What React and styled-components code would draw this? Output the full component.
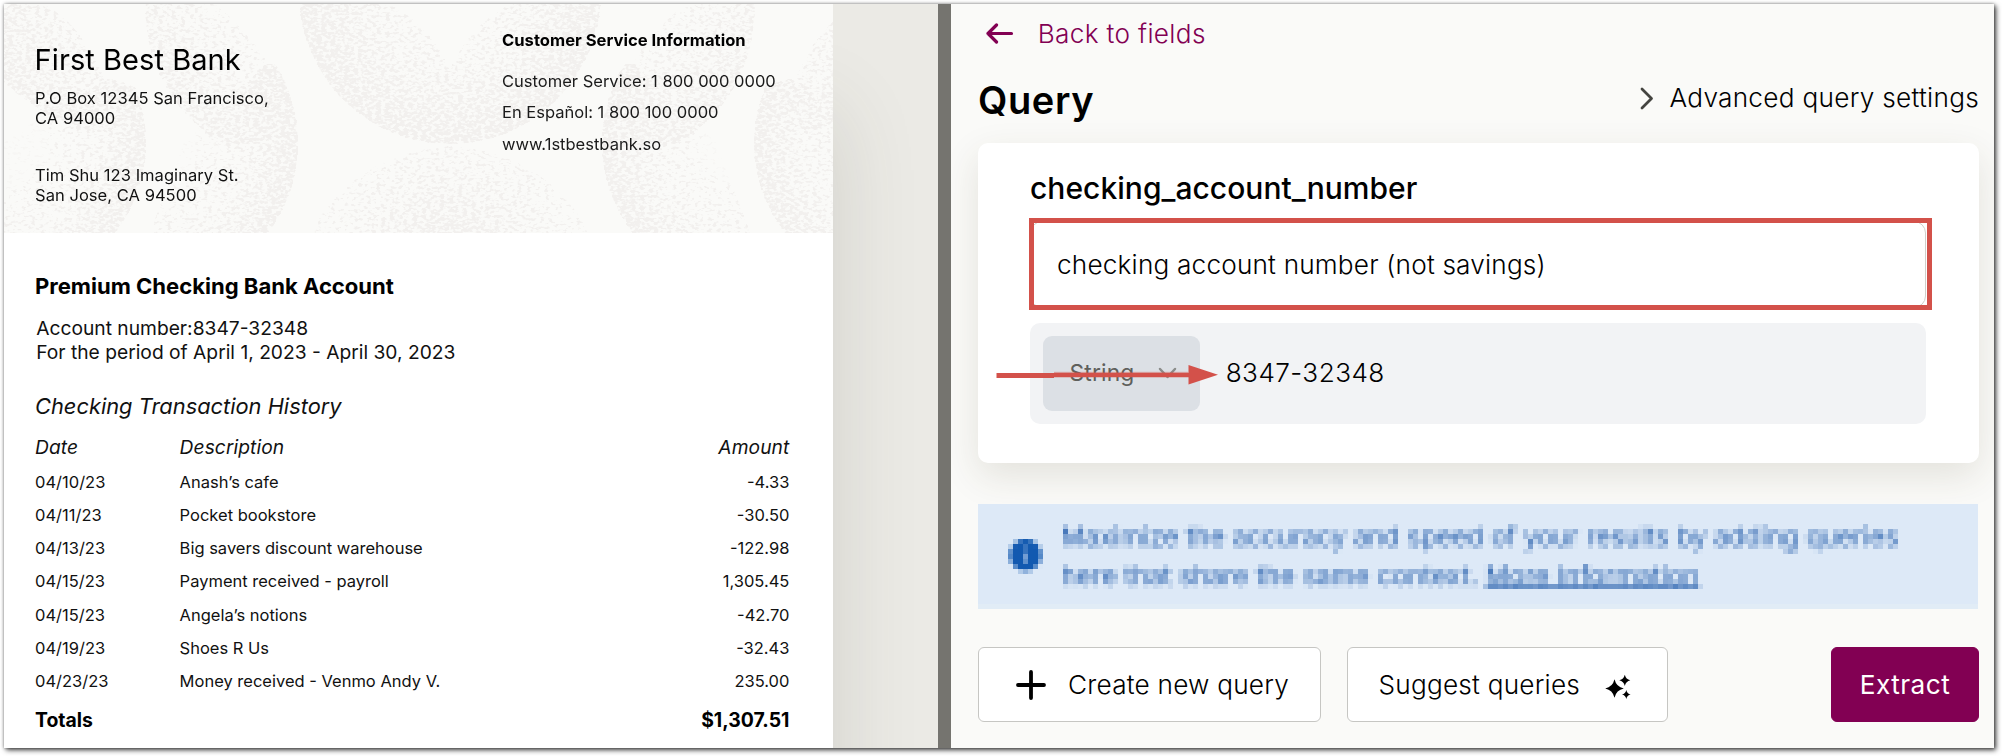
import React from 'react';
import styled, { createGlobalStyle, css } from 'styled-components';

const GlobalStyle = createGlobalStyle`
  *, *::before, *::after { box-sizing: border-box; }
  body { margin: 0; background: #fff; }
  button { font: inherit; color: inherit; cursor: pointer; }
`;

const Stage = styled.div`
  width: 2002px;
  height: 756px;
  overflow: hidden;
  padding: 4px 8px 8px 4px;
  background: #fff;
  font-family: Inter, 'Liberation Sans', sans-serif;
  color: #000;
`;

const Window = styled.div`
  width: 1990px;
  height: 744px;
  display: flex;
  box-shadow: 2px 2px 5px rgba(0, 0, 0, 0.75), 0 0 3px rgba(0, 0, 0, 0.35);
`;

/* ---------- document viewer ---------- */

const Viewer = styled.section`
  width: 934px;
  overflow: hidden;
  background: #ebeae5;
`;

const Paper = styled.article`
  width: 829px;
  height: 744px;
  background: #fff;
  box-shadow: 0 110px 80px rgba(70, 66, 58, 0.16);
`;

const Letterhead = styled.header`
  position: relative;
  height: 229px;
  background: #fafaf8;
  display: flex;
`;

const Texture = styled.svg`
  position: absolute;
  inset: 0;
`;

const Sender = styled.div`
  position: relative;
  width: 498px;
  padding: 38px 0 0 31px;
`;

const BankName = styled.h1`
  margin: 0 0 9.8px -0.4px;
  font-size: 29px;
  font-weight: 400;
  line-height: 36px;
  letter-spacing: 0.07px;
`;

const Address = styled.p`
  margin: 0 0 35.8px;
  font-size: 16.55px;
  line-height: 20.6px;
  letter-spacing: 0.03px;
  color: #111;
`;

const Service = styled.div`
  position: relative;
  padding-top: 25.7px;
`;

const ServiceTitle = styled.h2`
  margin: 0 0 16px;
  font-size: 16.6px;
  font-weight: 700;
  line-height: 20px;
`;

const ServiceLine = styled.p`
  margin: 0;
  font-size: 16.52px;
  line-height: 31.8px;
  color: #1a1a1a;
`;

const Statement = styled.div`
  padding: 38.7px 43.6px 0 31px;
`;

const AccountTitle = styled.h2`
  margin: 0 0 17.4px;
  font-size: 22.05px;
  font-weight: 700;
  line-height: 28px;
`;

const AccountLine = styled.p`
  margin: 0 0 0 1.2px;
  font-size: 19.23px;
  line-height: 23.6px;
  color: #111;
`;

const HistoryTitle = styled.h3`
  margin: 27.8px 0 14.6px;
  font-size: 21.84px;
  font-weight: 400;
  font-style: italic;
  line-height: 28px;
  color: #111;
`;

const Row = styled.div`
  display: grid;
  grid-template-columns: 144.6px 1fr auto;
  font-size: 16.5px;
  line-height: 33.1px;
  color: #111;
  ${(p) => p.$kind === 'head' && css`
    font-size: 19.2px;
    font-style: italic;
    line-height: 24px;
    letter-spacing: 0.08px;
    margin-bottom: 7.5px;
  `}
  ${(p) => p.$kind === 'total' && css`
    font-size: 19.4px;
    font-weight: 700;
    line-height: 24px;
    margin-top: 9.8px;
    color: #000;
  `}
`;

const Divider = styled.div`
  width: 13px;
  background: #75746f;
`;

/* ---------- query panel ---------- */

const Panel = styled.section`
  flex: 1;
  overflow: hidden;
  background: #fafaf8;
  padding: 13px 15px 0 27px;
  font-size: 26.2px;
  font-weight: 365;
  line-height: 32px;
`;

const BackLink = styled.a`
  display: flex;
  align-items: center;
  gap: 22.7px;
  padding: 1px 0 0 8px;
  color: #820053;
  letter-spacing: 0.33px;
`;

const PanelHead = styled.div`
  display: flex;
  justify-content: space-between;
  height: 93px;
  padding-top: 26.7px;
`;

const PanelTitle = styled.h2`
  margin: 0;
  font-size: 38px;
  font-weight: 600;
  line-height: 46px;
  letter-spacing: 0.6px;
`;

const Advanced = styled.div`
  display: flex;
  align-items: center;
  height: 32px;
  margin-top: 5.4px;
  gap: 15.5px;
  letter-spacing: 0.28px;
`;

const Card = styled.div`
  width: 1001px;
  height: 320px;
  padding: 27px 53px 0 52px;
  background: #fff;
  border-radius: 10px;
  box-shadow: 0 13px 36px rgba(75, 65, 35, 0.125);
`;

const FieldName = styled.h3`
  margin: 0;
  font-size: 30px;
  font-weight: 500;
  line-height: 36px;
  letter-spacing: 0.03px;
`;

const PromptBox = styled.div`
  position: relative;
  display: flex;
  align-items: center;
  height: 87px;
  margin: 15px 0 15px;
  padding-left: 26px;
  border: 1px solid #cfcfca;
  border-radius: 12px;
  letter-spacing: 0.18px;
`;

const Highlight = styled.div`
  position: absolute;
  top: -4px;
  left: -2px;
  width: 903px;
  height: 92px;
  border: 5px solid #d3514a;
`;

const ResultRow = styled.div`
  position: relative;
  display: flex;
  align-items: center;
  gap: 25.7px;
  height: 101px;
  padding: 13px;
  background: #f2f3f5;
  border-radius: 10px;
`;

const TypeSelect = styled.div`
  display: flex;
  align-items: center;
  justify-content: space-between;
  width: 157px;
  height: 75px;
  padding: 0 23.5px 1px 26.5px;
  background: #dce0e5;
  border-radius: 9px;
  color: #5f605c;
  font-size: 22.8px;
  font-weight: 400;
  letter-spacing: 0.15px;
`;

const ResultValue = styled.span`
  padding-bottom: 2px;
  letter-spacing: 0.42px;
`;

const Pointer = styled.svg`
  position: absolute;
  left: -34px;
  top: 41px;
`;

const Notice = styled.div`
  display: flex;
  align-items: flex-start;
  width: 1000px;
  height: 105px;
  margin-top: 41px;
  padding: 13px 0 0 30px;
  gap: 18px;
  background: #dde9f7;
  border-bottom: 5px solid #e1ecf6;
  color: #2a62ae;
  font-weight: 400;
  font-size: 26px;
  line-height: 39px;
  letter-spacing: 0.085px;
  filter: url(#mosaic);

  svg { margin-top: 21px; flex: none; }
  p { margin: 0; }
`;

const SecondLine = styled.span`
  letter-spacing: 0.17px;
  a { text-decoration: underline; text-decoration-thickness: 3px; text-underline-offset: 1px; }
`;

const Actions = styled.div`
  display: flex;
  gap: 26px;
  margin-top: 38px;
`;

const Button = styled.button`
  display: flex;
  align-items: center;
  justify-content: ${(p) => (p.$primary ? 'center' : 'flex-start')};
  gap: ${(p) => p.$gap || 0}px;
  width: ${(p) => p.$width}px;
  height: 75px;
  padding: 0 0 0 ${(p) => p.$inset || 0}px;
  border: 1px solid ${(p) => (p.$primary ? '#820053' : '#c6c6c3')};
  border-radius: 6px;
  background: ${(p) => (p.$primary ? '#820053' : '#fff')};
  color: ${(p) => (p.$primary ? '#fff' : '#000')};
  font-weight: ${(p) => (p.$primary ? 400 : 'inherit')};
  letter-spacing: ${(p) => (p.$primary ? 0.5 : 0.22)}px;
  margin-left: ${(p) => (p.$primary ? 'auto' : 0)};
`;

const transactions = [
  ['04/10/23', 'Anash’s cafe', '-4.33'],
  ['04/11/23', 'Pocket bookstore', '-30.50'],
  ['04/13/23', 'Big savers discount warehouse', '-122.98'],
  ['04/15/23', 'Payment received - payroll', '1,305.45'],
  ['04/15/23', 'Angela’s notions', '-42.70'],
  ['04/19/23', 'Shoes R Us', '-32.43'],
  ['04/23/23', 'Money received - Venmo Andy V.', '235.00'],
];

/* Stippled overlapping discs behind the letterhead, symmetric about x = 446. */
function LetterheadTexture() {
  const side = (
    <>
      <path d="M0 0 H40 Q90 30 108 100 L90 130 Q40 115 0 78 Z" fill="url(#sideTop)" />
      <circle cx="-4" cy="139" r="146" fill="url(#rim)" clipPath="url(#lowerLeft)" />
      <path d="M142 0 A150 150 0 0 0 221 140 L262 140 Q285 80 250 40 Q225 10 210 0 Z" fill="url(#leaf)" />
      <circle cx="146" cy="139" r="148" fill="url(#rim)" clipPath="url(#lowerMid)" />
    </>
  );
  return (
    <Texture width="829" height="229" viewBox="0 0 829 229">
      <defs>
        <filter id="stipple" x="0" y="0" width="829" height="229" filterUnits="userSpaceOnUse" colorInterpolationFilters="sRGB">
          <feTurbulence type="fractalNoise" baseFrequency="0.22 0.35" numOctaves="2" seed="4" result="noise" />
          <feComposite in="noise" in2="SourceAlpha" operator="arithmetic" k2="1" k3="0.28" k4="-0.6" result="sum" />
          <feComponentTransfer in="sum" result="dots">
            <feFuncA type="linear" slope="8" />
          </feComponentTransfer>
          <feComponentTransfer in="SourceAlpha" result="area">
            <feFuncA type="linear" slope="20" />
          </feComponentTransfer>
          <feFlood floodColor="#f2f0ee" />
          <feComposite in2="dots" operator="in" />
          <feComposite in2="area" operator="in" />
        </filter>
        <radialGradient id="rim">
          <stop offset="0.3" stopColor="#000" stopOpacity="0.02" />
          <stop offset="0.65" stopColor="#000" stopOpacity="0.25" />
          <stop offset="1" stopColor="#000" stopOpacity="0.8" />
        </radialGradient>
        <radialGradient id="bowl">
          <stop offset="0.3" stopColor="#000" stopOpacity="0.15" />
          <stop offset="1" stopColor="#000" stopOpacity="0.8" />
        </radialGradient>
        <linearGradient id="leaf" x1="0" y1="1" x2="0.9" y2="0.2">
          <stop offset="0" stopColor="#000" stopOpacity="0.85" />
          <stop offset="1" stopColor="#000" stopOpacity="0.05" />
        </linearGradient>
        <linearGradient id="sideTop" x1="0" y1="0.7" x2="1" y2="0.2">
          <stop offset="0" stopColor="#000" stopOpacity="0.7" />
          <stop offset="1" stopColor="#000" stopOpacity="0.1" />
        </linearGradient>
        <radialGradient id="wedge" gradientUnits="userSpaceOnUse" cx="446" cy="250" r="130">
          <stop offset="0" stopColor="#000" stopOpacity="0.9" />
          <stop offset="0.45" stopColor="#000" stopOpacity="0.45" />
          <stop offset="1" stopColor="#000" stopOpacity="0.05" />
        </radialGradient>
        <clipPath id="lowerLeft"><path d="M0 139 L60 96 L105 75 L160 90 V229 H0 Z" /></clipPath>
        <clipPath id="lowerMid"><path d="M180 139 L262 60 L300 60 V229 H146 Z" /></clipPath>
        <clipPath id="notch"><path d="M280 0 H385 Q425 20 446 66 Q467 20 507 0 H612 V160 H280 Z" /></clipPath>
      </defs>
      <g filter="url(#stipple)">
        {side}
        <g transform="translate(892 0) scale(-1 1)">{side}</g>
        <circle cx="446" cy="-11" r="151" fill="url(#bowl)" clipPath="url(#notch)" />
        <path d="M306 229 Q350 150 446 142 Q542 150 586 229 Z" fill="url(#wedge)" />
      </g>
    </Texture>
  );
}

function MosaicFilter() {
  return (
    <svg width="0" height="0" style={{ position: 'absolute' }} aria-hidden="true">
      <filter id="mosaic" x="0" y="0" width="1000" height="105" filterUnits="userSpaceOnUse" primitiveUnits="userSpaceOnUse" colorInterpolationFilters="sRGB">
        <feConvolveMatrix in="SourceGraphic" order="5" kernelMatrix={Array(25).fill(1).join(' ')} divisor="25" edgeMode="duplicate" preserveAlpha="true" result="soft" />
        <feFlood x="2" y="2" width="1" height="1" floodColor="#000" />
        <feComposite x="0" y="0" width="5" height="5" />
        <feTile result="grid" />
        <feComposite in="soft" in2="grid" operator="in" />
        <feMorphology operator="dilate" radius="2" />
      </filter>
    </svg>
  );
}

const stroke = { fill: 'none', strokeLinecap: 'round', strokeLinejoin: 'round' };

export default function App() {
  return (
    <Stage>
      <GlobalStyle />
      <MosaicFilter />
      <Window>
        <Viewer>
          <Paper>
            <Letterhead>
              <LetterheadTexture />
              <Sender>
                <BankName>First Best Bank</BankName>
                <Address>P.O Box 12345 San Francisco,<br />CA 94000</Address>
                <Address>Tim Shu 123 Imaginary St.<br />San Jose, CA 94500</Address>
              </Sender>
              <Service>
                <ServiceTitle>Customer Service Information</ServiceTitle>
                <ServiceLine>Customer Service: 1 800 000 0000</ServiceLine>
                <ServiceLine>En Español: 1 800 100 0000</ServiceLine>
                <ServiceLine>www.1stbestbank.so</ServiceLine>
              </Service>
            </Letterhead>
            <Statement>
              <AccountTitle>Premium Checking Bank Account</AccountTitle>
              <AccountLine>Account number:8347-32348</AccountLine>
              <AccountLine>For the period of April 1, 2023 - April 30, 2023</AccountLine>
              <HistoryTitle>Checking Transaction History</HistoryTitle>
              <Row $kind="head"><span>Date</span><span>Description</span><span>Amount</span></Row>
              {transactions.map(([date, text, amount]) => (
                <Row key={text}><span>{date}</span><span>{text}</span><span>{amount}</span></Row>
              ))}
              <Row $kind="total"><span>Totals</span><span /><span>$1,307.51</span></Row>
            </Statement>
          </Paper>
        </Viewer>
        <Divider />
        <Panel>
          <BackLink>
            <svg width="29" height="24" viewBox="0 0 29 24" stroke="currentColor" strokeWidth="3.2" {...stroke}>
              <path d="M10.5 3 L2 11.5 L10.5 20 M2 11.5 H25.5" />
            </svg>
            Back to fields
          </BackLink>
          <PanelHead>
            <PanelTitle>Query</PanelTitle>
            <Advanced>
              <svg width="14" height="24" viewBox="0 0 14 24" stroke="#444440" strokeWidth="2.8" {...stroke}>
                <path d="M2 3 L11.5 12.5 L2 22" />
              </svg>
              Advanced query settings
            </Advanced>
          </PanelHead>
          <Card>
            <FieldName>checking_account_number</FieldName>
            <PromptBox>
              checking account number (not savings)
              <Highlight />
            </PromptBox>
            <ResultRow>
              <TypeSelect>
                String
                <svg width="19" height="14" viewBox="0 0 19 14" stroke="#8b8d8b" strokeWidth="2.5" {...stroke}>
                  <path d="M2 3 L9.5 11 L17 3" />
                </svg>
              </TypeSelect>
              <ResultValue>8347-32348</ResultValue>
              <Pointer width="224" height="22" viewBox="0 0 224 22">
                <path d="M58 8.5 H192" stroke="#d3514a" strokeOpacity="0.3" strokeWidth="1.5" />
                <path d="M0.5 9 H58 V8.8 H193 V13.2 H58 V14 H0.5 Z" fill="#d3514a" />
                <path d="M192.5 1 L222 10.7 L192.5 20.5 Z" fill="#d3514a" />
              </Pointer>
            </ResultRow>
          </Card>
          <Notice>
            <svg width="35" height="35" viewBox="0 0 35 35">
              <circle cx="17.5" cy="17" r="16" fill="#1259b0" />
              <path d="M18.5 9 V12 M17.5 15 V25" stroke="#a9c4e6" strokeWidth="3.2" />
            </svg>
            <p>
              Maximize the accuracy and speed of your results by adding queries
              <br />
              <SecondLine>here that share the same context. <a>More Information</a></SecondLine>
            </p>
          </Notice>
          <Actions>
            <Button $width={343} $inset={36} $gap={21}>
              <svg width="32" height="32" viewBox="0 0 32 32" stroke="#000" strokeWidth="3.8" {...stroke}>
                <path d="M16 3 V29 M3 16 H29" />
              </svg>
              Create new query
            </Button>
            <Button $width={321} $inset={30.5} $gap={23.5}>
              Suggest queries
              <svg width="28" height="28" viewBox="0 0 28 28">
                <path d="M10.5 8.3 Q12.3 16 19.8 17.5 Q12.3 19 10.5 26.7 Q8.7 19 1.2 17.5 Q8.7 16 10.5 8.3 Z" />
                <path d="M20.8 3.7 Q21.9 8.3 26.3 9.3 Q21.9 10.3 20.8 14.9 Q19.7 10.3 15.3 9.3 Q19.7 8.3 20.8 3.7 Z" />
                <path d="M22.3 19 Q23.1 22.8 26.6 23.5 Q23.1 24.2 22.3 28 Q21.5 24.2 18 23.5 Q21.5 22.8 22.3 19 Z" />
              </svg>
            </Button>
            <Button $width={148} $primary>Extract</Button>
          </Actions>
        </Panel>
      </Window>
    </Stage>
  );
}
